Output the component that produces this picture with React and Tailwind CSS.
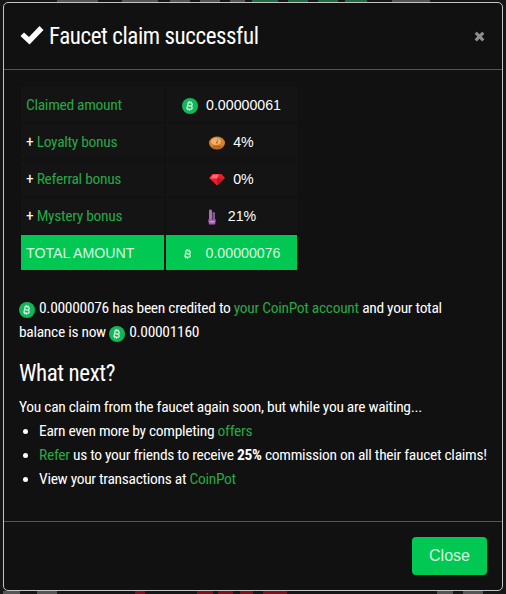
import React from 'react'
import { FaBitcoinSign } from 'react-icons/fa6'

const narrow = "font-['Roboto',sans-serif] [font-stretch:75%] text-[15.5px] tracking-[-0.3px]"
const arial = "font-['Liberation_Sans',sans-serif] [font-stretch:100%] tracking-normal text-[14.2px]"

const topBits = [[57, ''], [41, '#555555'], [24, ''], [36, '#555555'], [12, ''], [20, '#555555'], [10, ''], [20, '#555555'], [10, ''], [15, '#555555'], [7, ''], [26, '#1f6b3f'], [10, ''], [20, '#1f6b3f'], [10, ''], [20, '#1f6b3f'], [7, ''], [22, '#1f6b3f'], [25, ''], [38, '#555555']]
const bottomBits = [[3, ''], [17, '#555555'], [17, ''], [20, '#555555'], [78, ''], [10, '#7a1020'], [52, ''], [16, '#7a1020'], [5, ''], [15, '#7a1020'], [7, ''], [13, '#7a1020'], [10, ''], [24, '#7a1020'], [150, ''], [16, '#555555'], [10, ''], [20, '#555555']]

function Strip({ bits, className }) {
    return (
        <div className={`flex ${className}`}>
            {bits.map(([w, c], i) => <div key={i} style={{ width: w, background: c || 'transparent' }} />)}
        </div>
    )
}

function BchCoin({ className = 'w-[16px] h-[16px]' }) {
    return (
        <span className={`${className} rounded-full bg-[#10b85a] inline-flex items-center justify-center shrink-0`}>
            <FaBitcoinSign className="w-[10px] h-[10px] rotate-12 text-[#d8f5e2]" />
        </span>
    )
}

function LoyaltyIcon() {
    return (
        <svg viewBox="0 0 16 16" className="w-[16px] h-[16px]">
            <ellipse cx="8" cy="8" rx="8" ry="6.5" fill="#d9822e" />
            <ellipse cx="7" cy="6.5" rx="5" ry="3.5" fill="#f0b070" />
            <path d="M8.5 3.5 L9 8.5 L7 8.5 Z" fill="#c86a1e" />
            <ellipse cx="8" cy="12" rx="5" ry="1.8" fill="#b8691c" />
        </svg>
    )
}

function RubyIcon() {
    return (
        <svg viewBox="0 0 16 16" className="w-[16px] h-[16px]">
            <path d="M3.5 2 H12.5 L16 6 L8 13.5 L0 6 Z" fill="#e8202c" />
            <path d="M4 2.5 H10 L8 6.5 H1.5 Z" fill="#ff6a70" />
            <path d="M8 6.5 H14 L8 12.5 Z" fill="#c4141f" />
        </svg>
    )
}

function CrystalIcon() {
    return (
        <svg viewBox="0 0 10 16" className="w-[10px] h-[16px]">
            <rect x="2" y="0.5" width="3" height="11" rx="1.4" fill="#a870b8" />
            <rect x="5.5" y="3" width="2.5" height="8.5" rx="1.2" fill="#8a5498" />
            <path d="M1 10.5 H9 L8 15.5 H2 Z" fill="#9a5fa8" />
            <rect x="2.5" y="12" width="5" height="1.5" fill="#c99ad4" />
        </svg>
    )
}

function Row({ label, children }) {
    return (
        <div className="flex gap-[2px] h-[35px] mb-[2px]">
            <div className="w-[143px] bg-[#141414] flex items-center pl-[5px] pt-[3px]"><span>{label}</span></div>
            <div className={`w-[131px] bg-[#141414] flex items-center justify-center pt-[2px] ${arial}`}>{children}</div>
        </div>
    )
}

function Link({ children }) {
    return <span className="text-[#28a745]">{children}</span>
}

export default function App() {
    return (
        <div className="w-[506px] h-[594px] bg-[#161616] overflow-hidden">
            <Strip bits={topBits} className="h-[2px]" />
            <div className={`${narrow} ml-[3px] w-[500px] h-[589px] bg-[#111111] border border-[#c4c4c4] rounded-[5px] text-white flex flex-col`}>
                <div className="h-[67px] border-b border-[#555555] flex items-center justify-between pl-[16px] pr-[16px] shrink-0">
                    <div className="flex items-center gap-[5px]">
                        <svg viewBox="0 0 24 20" className="w-[24px] h-[20px] mb-[3px]">
                            <path d="M0.5 11 L4 7.5 L9 12 L19.5 1 L23.5 5 L9.5 19.5 Z" fill="#ffffff" />
                        </svg>
                        <h4 className="text-[23px] tracking-[-0.43px] leading-[30px] pt-[2px]">Faucet claim successful</h4>
                    </div>
                    <svg viewBox="0 0 12 12" className="w-[13px] h-[13px]">
                        <path d="M1.5 3.5 L3.5 1.5 L6 4 L8.5 1.5 L10.5 3.5 L8 6 L10.5 8.5 L8.5 10.5 L6 8 L3.5 10.5 L1.5 8.5 L4 6 Z" fill="#8f8f8f" />
                    </svg>
                </div>

                <div className="flex-1 pl-[15px] pr-[15px]">
                    <div className="ml-[2px] mt-[17px] w-[276px]">
                        <Row label={<Link>Claimed amount</Link>}>
                            <BchCoin />
                            <span className="ml-[8px]">0.00000061</span>
                        </Row>
                        <Row label={<>+ <Link>Loyalty bonus</Link></>}>
                            <LoyaltyIcon />
                            <span className="ml-[8px]">4%</span>
                        </Row>
                        <Row label={<>+ <Link>Referral bonus</Link></>}>
                            <RubyIcon />
                            <span className="ml-[8px]">0%</span>
                        </Row>
                        <Row label={<>+ <Link>Mystery bonus</Link></>}>
                            <CrystalIcon />
                            <span className="ml-[11px]">21%</span>
                        </Row>
                        <div className={`flex gap-[2px] h-[35px] text-[#d9f7e3] ${arial}`}>
                            <div className="w-[143px] bg-[#00c853] flex items-center pl-[5px] pt-[2px]">TOTAL AMOUNT</div>
                            <div className="w-[131px] bg-[#00c853] flex items-center justify-center pt-[2px]">
                                <FaBitcoinSign className="w-[10px] h-[10px] rotate-12" />
                                <span className="ml-[13px]">0.00000076</span>
                            </div>
                        </div>
                    </div>

                    <p className="mt-[26px] leading-[24px]">
                        <BchCoin className="w-[16px] h-[16px] align-[-2px] mr-[4px]" />
                        0.00000076 has been credited to <Link>your CoinPot account</Link> and your total
                        <br />
                        balance is now <BchCoin className="w-[16px] h-[16px] align-[-2px] mr-[4px]" />0.00001160
                    </p>

                    <h4 className="mt-[15px] text-[23px] tracking-[-0.43px] leading-[30px]">What next?</h4>

                    <p className="mt-[6px] leading-[24px]">You can claim from the faucet again soon, but while you are waiting...</p>
                    <ul className="list-disc pl-[20px] leading-[24px]">
                        <li>Earn even more by completing <Link>offers</Link></li>
                        <li><Link>Refer</Link> us to your friends to receive <b>25%</b> commission on all their faucet claims!</li>
                        <li>View your transactions at <Link>CoinPot</Link></li>
                    </ul>
                </div>

                <div className="h-[69px] border-t border-[#555555] flex items-center justify-end pr-[15px] shrink-0">
                    <button className="w-[75px] h-[38px] bg-[#00c853] rounded-[4px] font-['Liberation_Sans',sans-serif] [font-stretch:100%] tracking-normal text-[16px] text-[#d9f7e3]">Close</button>
                </div>
            </div>
            <Strip bits={bottomBits} className="h-[3px]" />
        </div>
    )
}
